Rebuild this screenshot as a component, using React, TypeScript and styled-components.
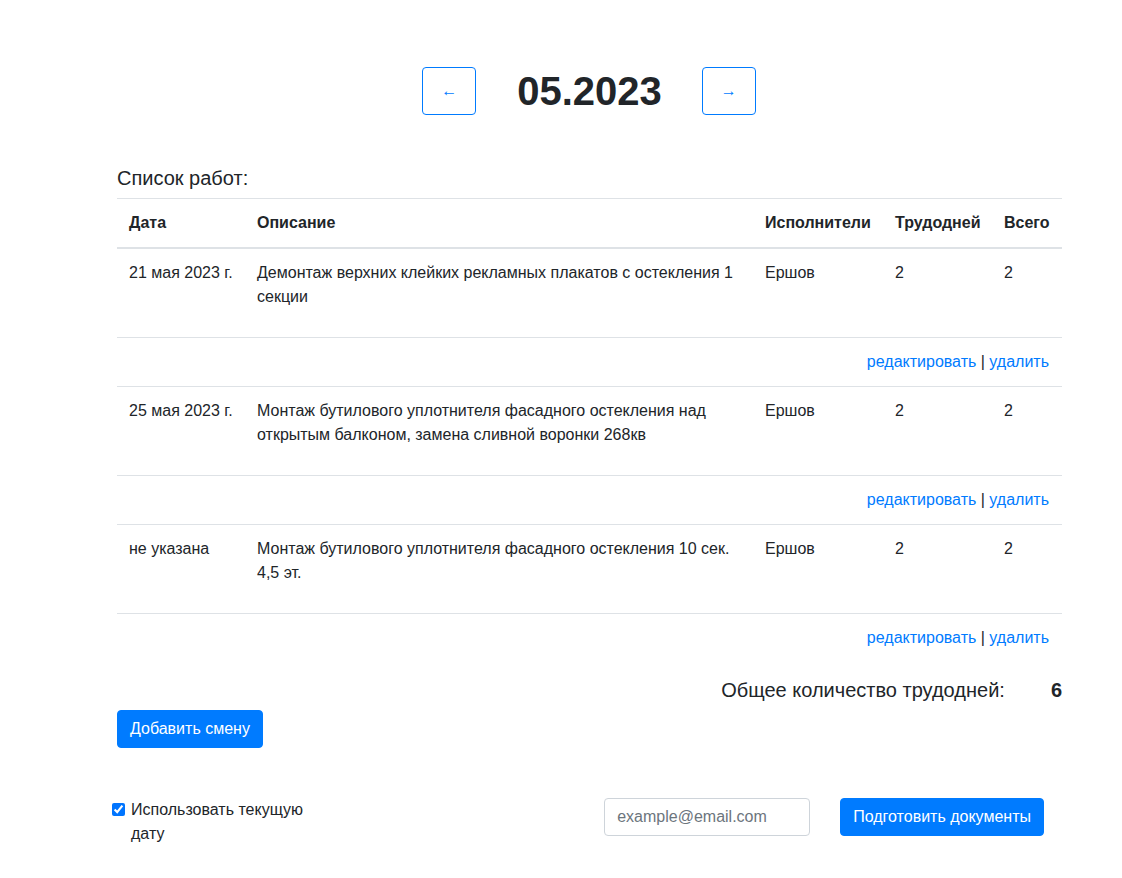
import React from 'react';
import styled, { createGlobalStyle } from 'styled-components';

const GlobalStyle = createGlobalStyle`
    * { box-sizing: border-box; }
    body {
        margin: 0;
        background: #fff;
        color: #212529;
        font-family: "Liberation Sans", Arial, sans-serif;
        font-size: 16px;
        line-height: 1.5;
    }
`;

const Container = styled.div`
    width: 945px;
    margin-left: 117px;
    padding-top: 67px;
    padding-bottom: 40px;
`;

const MonthBar = styled.div`
    display: flex;
    justify-content: center;
    align-items: center;
    padding-right: 1px;
    margin-bottom: 50.5px;
`;

const ArrowButton = styled.button`
    width: 54px;
    height: 48px;
    border: 1px solid #007bff;
    border-radius: 4px;
    background: #fff;
    color: #007bff;
    font-family: "Liberation Sans", Arial, sans-serif;
    font-size: 16px;
    cursor: pointer;
`;

const Month = styled.h1`
    margin: 0 40px 0 41px;
    font-size: 40px;
    font-weight: 700;
    line-height: 1.2;
`;

const Heading = styled.h5`
    margin: 0 0 8px 0;
    font-size: 20px;
    font-weight: 400;
    line-height: 1.2;
`;

const Table = styled.table`
    width: 945px;
    table-layout: fixed;
    border-collapse: collapse;
    margin-bottom: 16px;
`;

const Th = styled.th<{ $w: number }>`
    width: ${p => p.$w}px;
    padding: 12px;
    text-align: left;
    vertical-align: bottom;
    font-weight: 700;
    border-top: 1px solid #dee2e6;
    border-bottom: 2px solid #dee2e6;
`;

const Td = styled.td`
    padding: 12px;
    vertical-align: top;
    border-top: 1px solid #dee2e6;
`;

const ActionsCell = styled(Td)`
    text-align: right;
    padding-right: 13px;
`;

const Description = styled.p`
    margin: 0 0 16px 0;
`;

const Link = styled.a`
    color: #007bff;
    text-decoration: none;
    cursor: pointer;
`;

const TotalRow = styled.div`
    display: flex;
    justify-content: flex-end;
    align-items: center;
`;

const TotalLabel = styled.h5`
    margin: 0 0 8px 0;
    font-size: 20px;
    font-weight: 400;
    line-height: 1.2;
`;

const TotalValue = styled(TotalLabel)`
    font-weight: 700;
    margin-left: 46px;
`;

const Button = styled.button`
    padding: 6px 12px;
    border: 1px solid #007bff;
    border-radius: 4px;
    background: #007bff;
    color: #fff;
    font-family: "Liberation Sans", Arial, sans-serif;
    font-size: 16px;
    line-height: 1.5;
    cursor: pointer;
`;

const BottomRow = styled.div`
    display: flex;
    align-items: flex-start;
    margin-top: 50px;
    margin-left: -6px;
`;

const FormCheck = styled.div`
    position: relative;
    width: 215px;
    padding-left: 20px;
`;

const CheckInput = styled.input`
    position: absolute;
    left: 0;
    top: 0;
    margin: 5px 0 0 1px;
    width: 13px;
    height: 13px;
`;

const CheckLabel = styled.label`
    display: block;
`;

const RightGroup = styled.div`
    display: flex;
    align-items: center;
    gap: 30px;
    margin-left: auto;
    margin-right: 18px;
`;

const EmailInput = styled.input`
    width: 206px;
    height: 38px;
    padding: 6px 12px;
    border: 1px solid #ced4da;
    border-radius: 4px;
    font-family: "Liberation Sans", Arial, sans-serif;
    font-size: 16px;
    color: #495057;
    &::placeholder {
        color: #6c757d;
    }
`;

const works = [
    { date: '21 мая 2023 г.', text: 'Демонтаж верхних клейких рекламных плакатов с остекления 1 секции', who: 'Ершов', days: 2, total: 2 },
    { date: '25 мая 2023 г.', text: 'Монтаж бутилового уплотнителя фасадного остекления над открытым балконом, замена сливной воронки 268кв', who: 'Ершов', days: 2, total: 2 },
    { date: 'не указана', text: 'Монтаж бутилового уплотнителя фасадного остекления 10 сек. 4,5 эт.', who: 'Ершов', days: 2, total: 2 },
];

const App = () => {
    const sum = works.reduce((acc, w) => acc + w.days, 0);

    return (
        <>
            <GlobalStyle />
            <Container>
                <MonthBar>
                    <ArrowButton>←</ArrowButton>
                    <Month>05.2023</Month>
                    <ArrowButton>→</ArrowButton>
                </MonthBar>
                <Heading>Список работ:</Heading>
                <Table>
                    <thead>
                        <tr>
                            <Th $w={128}>Дата</Th>
                            <Th $w={508}>Описание</Th>
                            <Th $w={130}>Исполнители</Th>
                            <Th $w={109}>Трудодней</Th>
                            <Th $w={70}>Всего</Th>
                        </tr>
                    </thead>
                    <tbody>
                        {works.map((w, i) => (
                            <React.Fragment key={i}>
                                <tr>
                                    <Td>{w.date}</Td>
                                    <Td><Description>{w.text}</Description></Td>
                                    <Td>{w.who}</Td>
                                    <Td>{w.days}</Td>
                                    <Td>{w.total}</Td>
                                </tr>
                                <tr>
                                    <ActionsCell colSpan={5}>
                                        <Link>редактировать</Link> | <Link>удалить</Link>
                                    </ActionsCell>
                                </tr>
                            </React.Fragment>
                        ))}
                    </tbody>
                </Table>
                <TotalRow>
                    <TotalLabel>Общее количество трудодней:</TotalLabel>
                    <TotalValue>{sum}</TotalValue>
                </TotalRow>
                <Button>Добавить смену</Button>
                <BottomRow>
                    <FormCheck>
                        <CheckInput type="checkbox" id="curdate" defaultChecked />
                        <CheckLabel htmlFor="curdate">Использовать текущую дату</CheckLabel>
                    </FormCheck>
                    <RightGroup>
                        <EmailInput type="email" placeholder="example@email.com" />
                        <Button>Подготовить документы</Button>
                    </RightGroup>
                </BottomRow>
            </Container>
        </>
    );
};

export default App;
